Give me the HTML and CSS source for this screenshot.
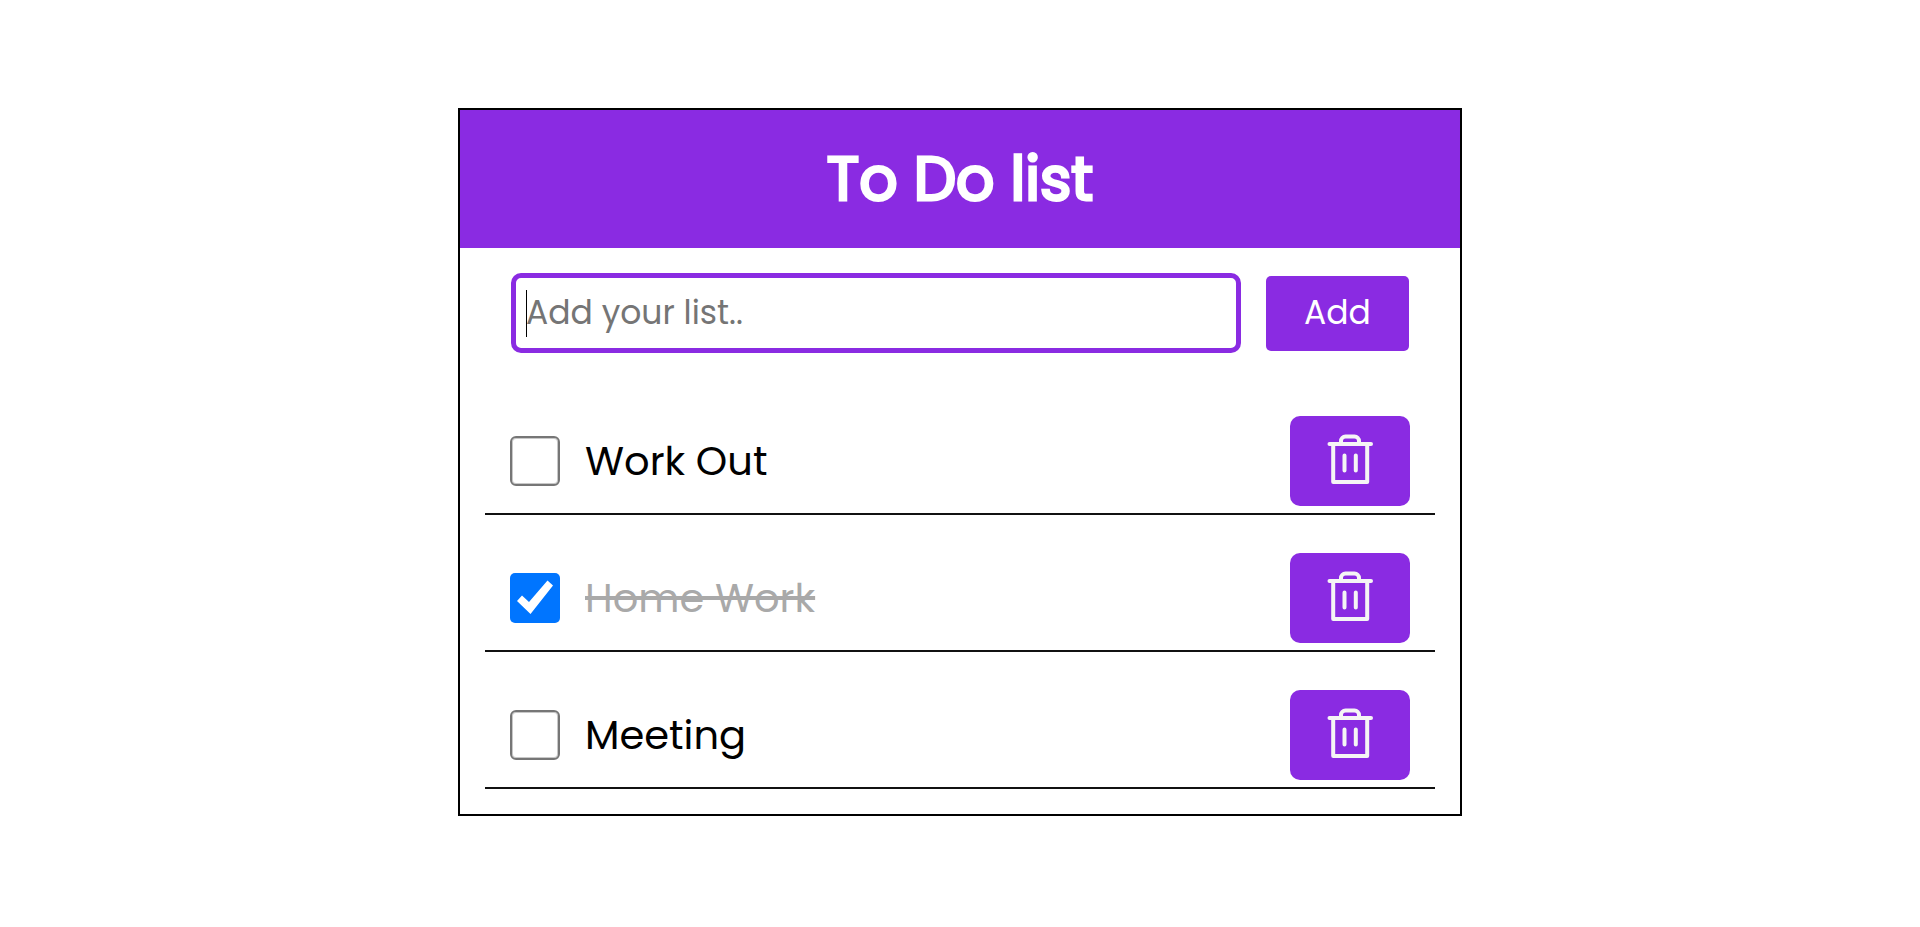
FILE: index.html
```html
<!DOCTYPE html>
<html lang="en">
<head>
<meta charset="utf-8">
<title>To Do list</title>
<link rel="stylesheet" href="styles.css">
</head>
<body>
<svg class="sprite" aria-hidden="true">
  <symbol id="trash" viewBox="0 0 48 56">
    <g fill="none" stroke="currentColor" stroke-linecap="round" stroke-linejoin="round" stroke-width="4">
      <path d="M3.500 11H45"/>
      <path d="M15 10V8a4.500 4.500 0 0 1 4.500-4.500H28.500a4.500 4.500 0 0 1 4.500 4.500V10"/>
      <path d="M7.200 12V49H41.200V12"/>
      <path d="M18.500 22.500V37.500M29.800 22.500V37.500"/>
    </g>
  </symbol>
</svg>
<main class="card">
  <header class="card-header"><h1 class="title">To Do list</h1></header>
  <form class="add-form">
    <div class="field">
      <input class="add-input" type="text" placeholder="Add your list.." aria-label="Add your list">
    </div>
    <button class="add-button" type="button">Add</button>
  </form>
  <ul class="list">
    <li class="item">
      <input class="check" type="checkbox" id="task-1">
      <label class="task" for="task-1">Work Out</label>
      <button class="delete" type="button" aria-label="Delete Work Out"><svg class="icon"><use href="#trash"/></svg></button>
    </li>
    <li class="item">
      <input class="check" type="checkbox" id="task-2" checked>
      <label class="task" for="task-2">Home Work</label>
      <button class="delete" type="button" aria-label="Delete Home Work"><svg class="icon"><use href="#trash"/></svg></button>
    </li>
    <li class="item">
      <input class="check" type="checkbox" id="task-3">
      <label class="task" for="task-3">Meeting</label>
      <button class="delete" type="button" aria-label="Delete Meeting"><svg class="icon"><use href="#trash"/></svg></button>
    </li>
  </ul>
</main>
</body>
</html>
```
FILE: styles.css
```css
* {
  box-sizing: border-box;
}

body,
input,
button {
  font-family: Poppins, Inter, sans-serif;
}

body {
  margin: 0;
  padding: 108px 16px;
  background: #fff;
  color: #000;
}

.sprite {
  display: none;
}

.card {
  max-width: 1004px;
  margin: 0 auto;
  border: 2px solid #000;
}

.card-header {
  padding: 21px 24px;
  background: blueviolet;
  color: #fff;
  text-align: center;
}

.title {
  margin: 0;
  font-size: 60px;
  font-weight: 400;
  line-height: 96px;
  -webkit-text-stroke: 3px #fff;
}

.add-form {
  display: flex;
  align-items: center;
  gap: 25px;
  padding: 25px 51px;
}

.field {
  position: relative;
  flex: 1;
  min-width: 0;
}

/* Text cursor at the start of the empty field */
.field::before {
  content: "";
  position: absolute;
  top: 17px;
  left: 15px;
  width: 1px;
  height: 47px;
  background: #000;
}

.add-input {
  display: block;
  width: 100%;
  height: 80px;
  padding: 0 10px;
  border: 5px solid blueviolet;
  border-radius: 10px;
  outline: none;
  font-size: 33px;
}

.add-input::placeholder {
  color: #757575;
}

.add-button {
  width: 143px;
  height: 75px;
  border: 0;
  border-radius: 5px;
  background: blueviolet;
  color: #fff;
  font-size: 33px;
}

.list {
  margin: 0;
  padding: 0 25px 25px;
  list-style: none;
}

.item {
  display: flex;
  align-items: center;
  gap: 25px;
  padding: 38px 25px 7px;
  border-bottom: 2px solid #111;
}

.check {
  appearance: none;
  flex: none;
  width: 50px;
  height: 50px;
  margin: 0;
  border: 2px solid #767676;
  border-radius: 6px;
  box-shadow: inset 0 0 0 1px #c8c8c8;
}

.check:checked {
  border: 0;
  border-radius: 5px;
  background: #0075ff;
  box-shadow: none;
}

.check:checked::before {
  content: "";
  display: block;
  height: 100%;
  background: #fff;
  clip-path: polygon(14% 56%, 24% 45%, 38% 58%, 75% 15%, 86% 25%, 41% 82%);
}

.task {
  flex: 1;
  font-size: 40px;
}

.check:checked + .task {
  color: #a9a9a9;
  text-decoration: line-through 4px;
}

.delete {
  display: grid;
  place-items: center;
  width: 120px;
  height: 90px;
  padding: 0;
  border: 0;
  border-radius: 10px;
  background: blueviolet;
  color: #f5f5f5;
}

.icon {
  width: 48px;
  height: 56px;
}
```
